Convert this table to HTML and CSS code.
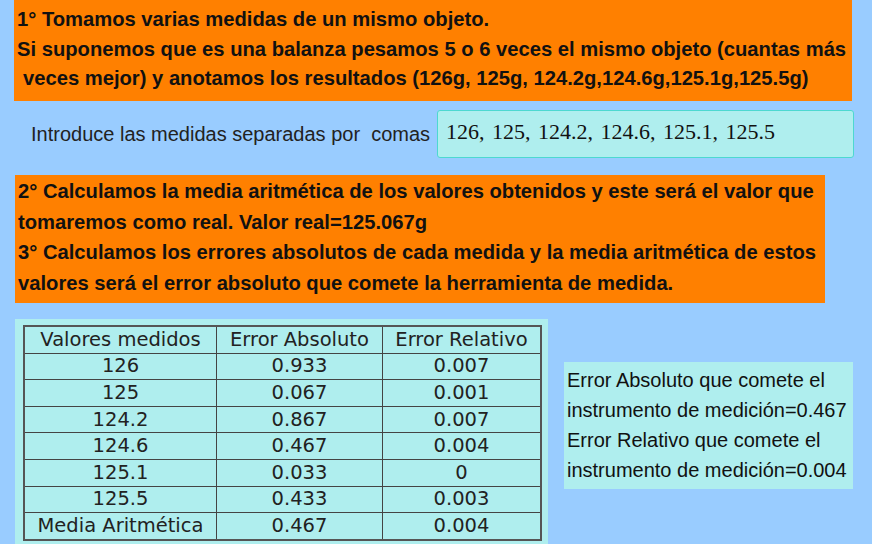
FILE: index.html
```html
<!DOCTYPE html>
<html lang="es">
<head>
<meta charset="utf-8">
<link rel="stylesheet" href="styles.css">
</head>
<body>
<div class="page">
  <div class="step step1">
    <div class="line">1° Tomamos varias medidas de un mismo objeto.</div>
    <div class="line">Si suponemos que es una balanza pesamos 5 o 6 veces el mismo objeto (cuantas más</div>
    <div class="line indent">veces mejor) y anotamos los resultados (126g, 125g, 124.2g,124.6g,125.1g,125.5g)</div>
  </div>
  <div class="input-row">
    <span class="label">Introduce las medidas separadas por&nbsp; comas</span>
    <div class="input">126, 125, 124.2, 124.6, 125.1, 125.5</div>
  </div>
  <div class="step step2">
    <div class="line">2° Calculamos la media aritmética de los valores obtenidos y este será el valor que</div>
    <div class="line">tomaremos como real. Valor real=125.067g</div>
    <div class="line">3° Calculamos los errores absolutos de cada medida y la media aritmética de estos</div>
    <div class="line">valores será el error absoluto que comete la herramienta de medida.</div>
  </div>
  <div class="bottom">
    <div class="panel">
      <table class="tbl">
        <tr><td>Valores medidos</td><td>Error Absoluto</td><td>Error Relativo</td></tr>
        <tr><td>126</td><td>0.933</td><td>0.007</td></tr>
        <tr><td>125</td><td>0.067</td><td>0.001</td></tr>
        <tr><td>124.2</td><td>0.867</td><td>0.007</td></tr>
        <tr><td>124.6</td><td>0.467</td><td>0.004</td></tr>
        <tr><td>125.1</td><td>0.033</td><td>0</td></tr>
        <tr><td>125.5</td><td>0.433</td><td>0.003</td></tr>
        <tr><td>Media Aritmética</td><td>0.467</td><td>0.004</td></tr>
      </table>
    </div>
    <div class="result">
      <div>Error Absoluto que comete el</div>
      <div>instrumento de medición=0.467</div>
      <div>Error Relativo que comete el</div>
      <div>instrumento de medición=0.004</div>
    </div>
  </div>
</div>
</body>
</html>
```
FILE: styles.css
```css
html, body {
  margin: 0;
  padding: 0;
  background: #99ccff;
  width: 872px;
  height: 544px;
  overflow: hidden;
}
.page {
  display: flex;
  flex-direction: column;
}
.step {
  background: #ff8000;
  font-family: "Liberation Sans", Arial, sans-serif;
  font-weight: bold;
  font-size: 20.2px;
  color: #111;
  white-space: nowrap;
  box-sizing: border-box;
}
.step1 {
  margin-left: 14px;
  width: 838px;
  height: 101px;
  padding: 5px 0 0 3px;
}
.step1 .line {
  line-height: 29.5px;
}
.indent {
  padding-left: 6px;
}
.input-row {
  display: flex;
  align-items: center;
  margin-top: 9px;
  height: 48px;
}
.label {
  font-family: "Liberation Sans", Arial, sans-serif;
  font-size: 20px;
  color: #222;
  margin-left: 31px;
  width: 406px;
  white-space: nowrap;
}
.input {
  box-sizing: border-box;
  width: 417px;
  height: 48px;
  background: #afeeee;
  border: 1px solid #4dd8d0;
  border-radius: 3px;
  font-family: "Liberation Serif", "DejaVu Serif", serif;
  font-size: 22px;
  word-spacing: 2px;
  color: #111;
  padding: 8px 0 0 8px;
  white-space: nowrap;
}
.step2 {
  margin-left: 15px;
  margin-top: 17px;
  width: 810px;
  height: 128px;
  padding: 1px 0 0 3px;
}
.step2 .line {
  line-height: 30.7px;
}
.bottom {
  display: flex;
  align-items: flex-start;
  margin-top: 16px;
}
.panel {
  margin-left: 15px;
  width: 533px;
  height: 230px;
  background: #afeeee;
  box-sizing: border-box;
  padding: 6px 0 0 8px;
}
.tbl {
  border-collapse: collapse;
  font-family: "DejaVu Sans", sans-serif;
  font-size: 19.5px;
  color: #222;
  border: 2px solid #555;
}
.tbl td {
  border: 1px solid #444;
  text-align: center;
  height: 25.6px;
  padding: 0;
  line-height: 24px;
}
.tbl td:nth-child(1) { width: 191px; }
.tbl td:nth-child(2) { width: 165px; }
.tbl td:nth-child(3) { width: 157px; }
.result {
  margin-left: 16px;
  margin-top: 43px;
  width: 289px;
  height: 127px;
  background: #afeeee;
  box-sizing: border-box;
  padding: 3px 0 0 3px;
  font-family: "Liberation Sans", Arial, sans-serif;
  font-size: 20px;
  color: #111;
  line-height: 30px;
}
```
